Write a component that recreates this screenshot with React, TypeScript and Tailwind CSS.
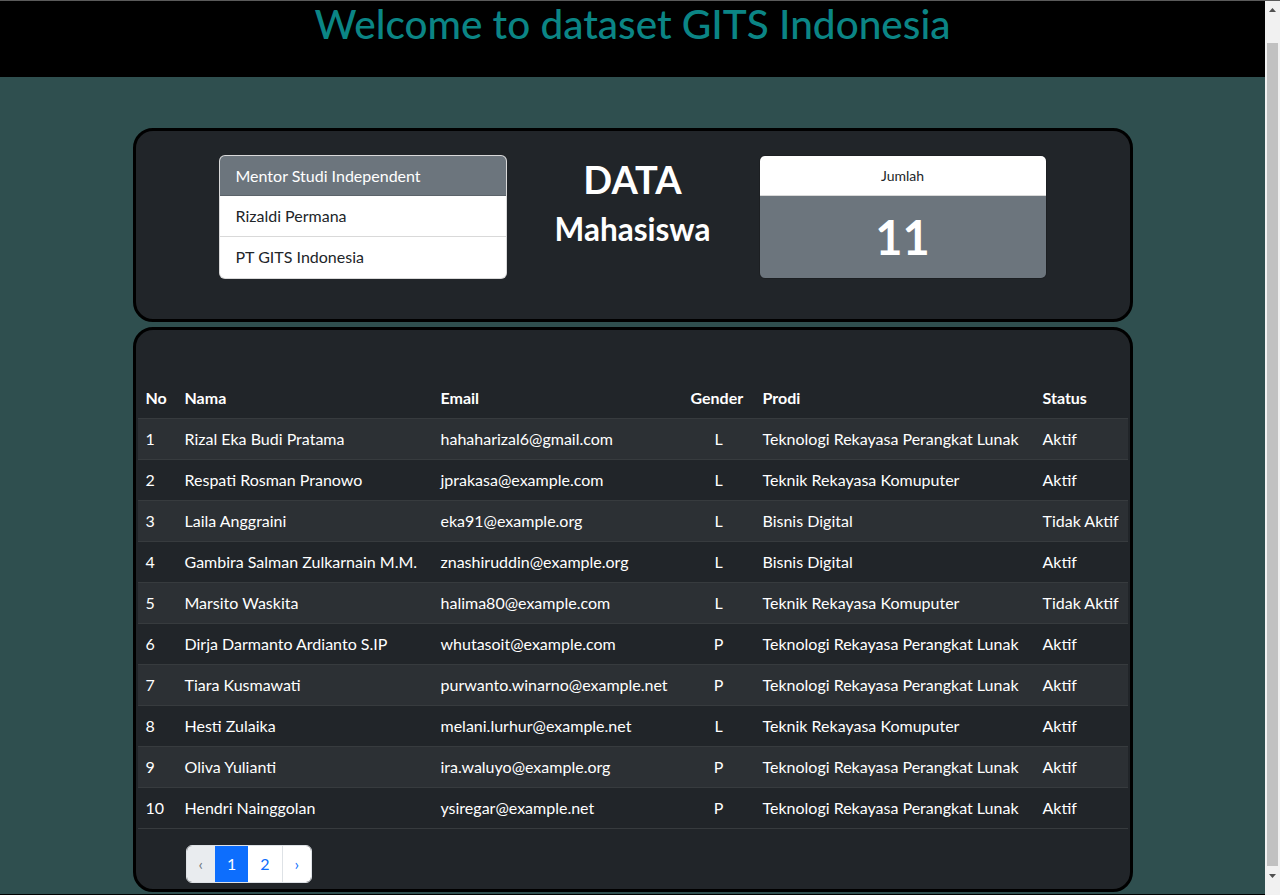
import React from "react";

type Mahasiswa = {
  no: number;
  nama: string;
  email: string;
  gender: string;
  prodi: string;
  status: string;
};

const TRPL = "Teknologi Rekayasa Perangkat Lunak";
const TRK = "Teknik Rekayasa Komuputer";

const rows: Mahasiswa[] = [
  { no: 1, nama: "Rizal Eka Budi Pratama", email: "hahaharizal6@gmail.com", gender: "L", prodi: TRPL, status: "Aktif" },
  { no: 2, nama: "Respati Rosman Pranowo", email: "jprakasa@example.com", gender: "L", prodi: TRK, status: "Aktif" },
  { no: 3, nama: "Laila Anggraini", email: "eka91@example.org", gender: "L", prodi: "Bisnis Digital", status: "Tidak Aktif" },
  { no: 4, nama: "Gambira Salman Zulkarnain M.M.", email: "znashiruddin@example.org", gender: "L", prodi: "Bisnis Digital", status: "Aktif" },
  { no: 5, nama: "Marsito Waskita", email: "halima80@example.com", gender: "L", prodi: TRK, status: "Tidak Aktif" },
  { no: 6, nama: "Dirja Darmanto Ardianto S.IP", email: "whutasoit@example.com", gender: "P", prodi: TRPL, status: "Aktif" },
  { no: 7, nama: "Tiara Kusmawati", email: "purwanto.winarno@example.net", gender: "P", prodi: TRPL, status: "Aktif" },
  { no: 8, nama: "Hesti Zulaika", email: "melani.lurhur@example.net", gender: "L", prodi: TRK, status: "Aktif" },
  { no: 9, nama: "Oliva Yulianti", email: "ira.waluyo@example.org", gender: "P", prodi: TRPL, status: "Aktif" },
  { no: 10, nama: "Hendri Nainggolan", email: "ysiregar@example.net", gender: "P", prodi: TRPL, status: "Aktif" },
];

function MentorList() {
  return (
    <div className="w-[288px] overflow-hidden rounded-md border border-black/15 bg-white text-base">
      <div className="h-10 border-b border-black/15 bg-[#6c757d] px-4 py-2 leading-6 text-white">Mentor Studi Independent</div>
      <div className="h-[41px] border-b border-black/15 px-4 py-2 leading-6 text-[#212529]">Rizaldi Permana</div>
      <div className="h-10 px-4 py-2 leading-6 text-[#212529]">PT GITS Indonesia</div>
    </div>
  );
}

function JumlahCard() {
  return (
    <div className="w-[288px] overflow-hidden rounded-md border border-black/15">
      <div className="h-10 border-b border-black/15 bg-white py-2 text-center text-sm leading-6 text-[#212529]">Jumlah</div>
      <div className="flex h-[82px] items-center justify-center bg-[#6c757d] text-[47px] font-bold leading-none text-white">11</div>
    </div>
  );
}

function Pagination() {
  return (
    <div className="ml-12 mt-[16px] flex h-[38px] w-fit overflow-hidden rounded-md border border-[#dee2e6] text-base leading-6">
      <span className="bg-[#e9ecef] px-3 py-1.5 text-[#6c757d]">‹</span>
      <span className="bg-[#0d6efd] px-3 py-1.5 text-white">1</span>
      <span className="border-r border-[#dee2e6] bg-white px-3 py-1.5 text-[#0d6efd]">2</span>
      <span className="bg-white px-3 py-1.5 text-[#0d6efd]">›</span>
    </div>
  );
}

// window scrollbar as it appears in the screenshot
function Scrollbar() {
  return (
    <aside className="sticky top-0 flex h-screen w-[15px] shrink-0 flex-col border-t border-[#5a5a5a] bg-[#f1f1f1]">
      <div className="flex h-[17px] items-center justify-center">
        <svg width="7" height="4" viewBox="0 0 7 4"><path d="M3.5 0L7 4H0z" fill="#505050" /></svg>
      </div>
      <div className="mx-[2px] mt-[25px] h-[823px] bg-[#c1c1c1]" />
      <div className="flex h-[17px] items-center justify-center pt-[3px]">
        <svg width="7" height="4" viewBox="0 0 7 4"><path d="M0 0h7L3.5 4z" fill="#505050" /></svg>
      </div>
    </aside>
  );
}

export default function App() {
  return (
    <div className="flex bg-[#2f4f4f] font-['Lato','Liberation_Sans',sans-serif]">
      <div className="min-w-0 flex-1">
        <header className="h-[77px] border-t border-[#5a5a5a] bg-black">
          <h1 className="text-center text-[40.5px] font-medium leading-[1.15] text-[#0b8585]">Welcome to dataset GITS Indonesia</h1>
        </header>

        <main className="mx-auto mt-[51px] flex w-[1000px] flex-col gap-[5px]">
          <section className="flex justify-center rounded-[20px] border-[3px] border-black bg-[#212529] pb-10 pt-6">
            <MentorList />
            <div className="flex w-[252px] flex-col items-center pt-[2px] text-white">
              <h1 className="text-[38px] font-bold leading-[1.2]">DATA</h1>
              <h2 className="mt-[8px] text-[31.5px] font-bold leading-[1.2]">Mahasiswa</h2>
            </div>
            <JumlahCard />
          </section>

          <section className="rounded-[20px] border-[3px] border-black bg-[#212529] px-[2px] pb-[6px] pt-12 text-white">
            <table className="w-[990px] table-fixed border-collapse text-left text-base leading-6">
              <colgroup>
                <col className="w-[39px]" />
                <col className="w-[256px]" />
                <col className="w-[250px]" />
                <col className="w-[72px]" />
                <col className="w-[280px]" />
                <col className="w-[93px]" />
              </colgroup>
              <thead>
                <tr className="border-b border-[#373b3e] font-bold">
                  <th className="px-2 py-2">No</th>
                  <th className="px-2 py-2">Nama</th>
                  <th className="px-2 py-2">Email</th>
                  <th className="px-2 py-2">Gender</th>
                  <th className="px-2 py-2">Prodi</th>
                  <th className="px-2 py-2">Status</th>
                </tr>
              </thead>
              <tbody>
                {rows.map((r) => (
                  <tr key={r.no} className={`border-b border-[#373b3e] ${r.no % 2 === 1 ? "bg-[#2c3034]" : "bg-[#212529]"}`}>
                    <td className="px-2 py-2">{r.no}</td>
                    <td className="whitespace-nowrap px-2 py-2">{r.nama}</td>
                    <td className="whitespace-nowrap px-2 py-2">{r.email}</td>
                    <td className="px-2 py-2 text-center">{r.gender}</td>
                    <td className="whitespace-nowrap px-2 py-2">{r.prodi}</td>
                    <td className="whitespace-nowrap px-2 py-2">{r.status}</td>
                  </tr>
                ))}
              </tbody>
            </table>
            <Pagination />
          </section>
        </main>
        <div className="mt-[2px] h-10 bg-black" />
      </div>
      <Scrollbar />
    </div>
  );
}
